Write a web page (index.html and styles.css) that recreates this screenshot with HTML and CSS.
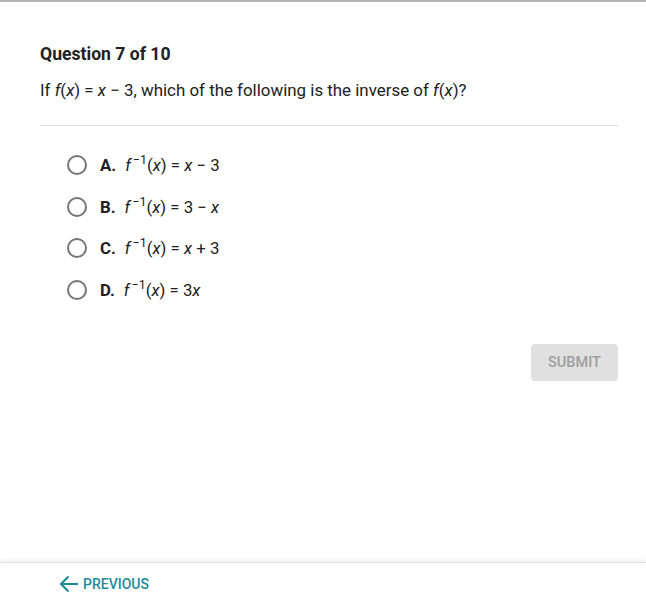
FILE: index.html
```html
<!DOCTYPE html>
<html lang="en">
<head>
  <meta charset="UTF-8">
  <meta name="viewport" content="width=device-width, initial-scale=1.0">
  <title>Question 7 of 10</title>
  <link rel="stylesheet" href="styles.css">
</head>
<body>
  <div class="page">
    <!-- Question -->
    <div class="question">
      <h1>Question 7 of 10</h1>
      <p>If <i>f</i>(<i>x</i>) = <i>x</i> &minus; 3, which of the following is the inverse of <i>f</i>(<i>x</i>)?</p>
    </div>

    <!-- Answers -->
    <div class="answers">
      <label class="answer">
        <span class="radio"></span>
        <b>A.</b>
        <span class="math"><i>f</i><sup>&minus;1</sup>(<i>x</i>) = <i>x</i> &minus; 3</span>
      </label>
      <label class="answer">
        <span class="radio"></span>
        <b>B.</b>
        <span class="math"><i>f</i><sup>&minus;1</sup>(<i>x</i>) = 3 &minus; <i>x</i></span>
      </label>
      <label class="answer">
        <span class="radio"></span>
        <b>C.</b>
        <span class="math"><i>f</i><sup>&minus;1</sup>(<i>x</i>) = <i>x</i> + 3</span>
      </label>
      <label class="answer">
        <span class="radio"></span>
        <b>D.</b>
        <span class="math"><i>f</i><sup>&minus;1</sup>(<i>x</i>) = 3<i>x</i></span>
      </label>
    </div>

    <div class="actions">
      <button class="submit" disabled>Submit</button>
    </div>
  </div>

  <!-- Footer -->
  <div class="footer">
    <a class="prev" href="#">
      <svg width="24" height="24" viewBox="0 0 24 24"><path d="M21 12H4.5M11.5 4.5L4 12l7.5 7.5" fill="none" stroke="currentColor" stroke-width="2.2"/></svg>
      Previous
    </a>
  </div>
</body>
</html>
```

FILE: styles.css
```css
body {
  margin: 0;
  font-family: Roboto, "Liberation Sans", sans-serif;
  color: #212121;
  background: #fff;
  border-top: 2px solid #b5b5b5;
  height: 607px;
  display: flex;
  flex-direction: column;
}
.page {
  flex: 1;
  padding: 0 28px 0 40px;
}
.question {
  padding-top: 40px;
  border-bottom: 1px solid #e0e0e0;
  padding-bottom: 23px;
}
.question h1 {
  margin: 0;
  font-size: 17.6px;
  font-weight: 700;
  line-height: 24px;
}
.question p {
  margin: 12px 0 0;
  font-size: 16.9px;
  line-height: 24px;
}
.answers {
  padding: 18px 0 0 27px;
}
.answer {
  display: flex;
  align-items: center;
  height: 41.7px;
  font-size: 16.8px;
}
.radio {
  width: 16px;
  height: 16px;
  border: 2px solid #757575;
  border-radius: 50%;
  margin-right: 13px;
}
.answer b {
  font-weight: 700;
  margin-right: 9px;
}
.math sup {
  font-size: 12.5px;
  vertical-align: 7px;
  line-height: 0;
  margin-left: 2px;
}
.actions {
  display: flex;
  justify-content: flex-end;
  margin-top: 33px;
}
.submit {
  font-family: inherit;
  font-size: 14.5px;
  font-weight: 500;
  text-transform: uppercase;
  color: #9e9e9e;
  background: #e0e0e0;
  border: none;
  border-radius: 4px;
  width: 87px;
  height: 37px;
}
.footer {
  height: 47px;
  border-top: 1px solid #e0e0e0;
  box-shadow: 0 -2px 4px rgba(0, 0, 0, 0.06);
  display: flex;
  align-items: center;
  padding: 0 0 4px 57px;
  box-sizing: border-box;
}
.prev {
  display: flex;
  align-items: center;
  gap: 2px;
  color: #1f8a99;
  text-decoration: none;
  font-size: 14px;
  font-weight: 500;
  text-transform: uppercase;
}
```
